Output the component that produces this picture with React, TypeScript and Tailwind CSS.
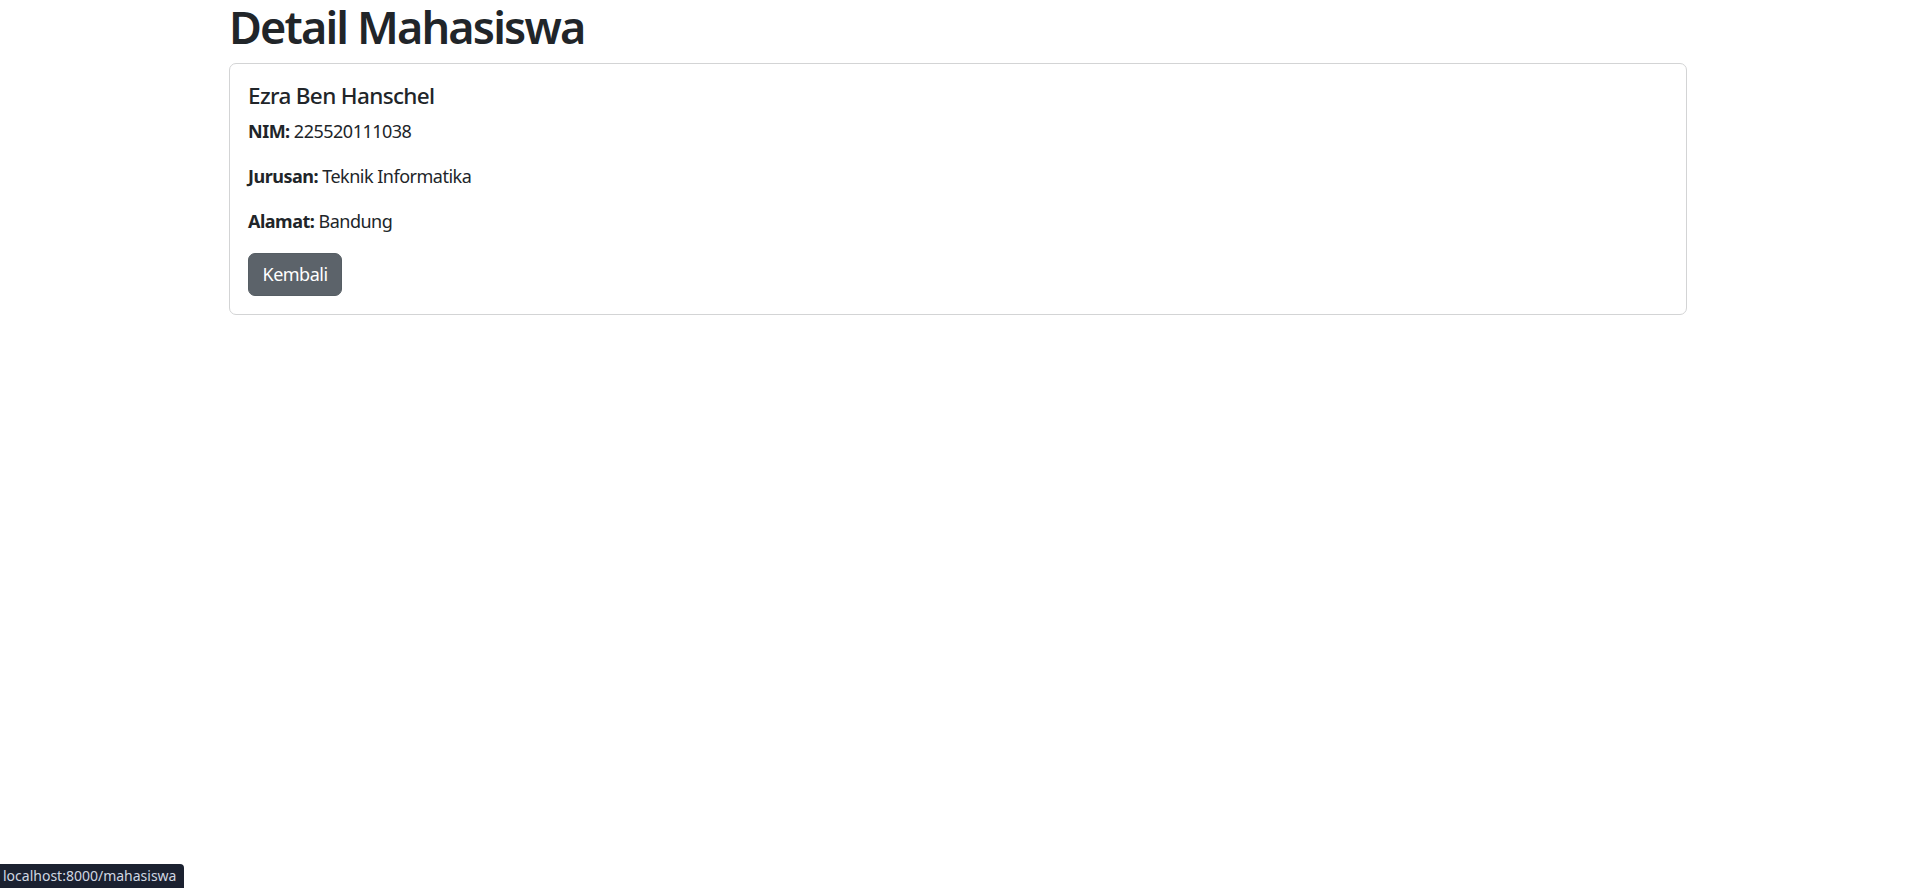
export default function App() {
  const font = { fontFamily: '"Noto Sans", "Open Sans", sans-serif' };
  return (
    <div className="min-h-[888px] bg-white text-[#212529] text-[18px] leading-[27px] tracking-[-0.5px]" style={font}>
      <div className="w-[1485px] mx-auto px-[13.5px]">
        <h1 className="text-[45px] leading-[54px] font-semibold tracking-[-1.85px] mb-[9px]">Detail Mahasiswa</h1>
        <div className="border border-[#d3d4d5] rounded-[7px]">
          <div className="p-[18px]">
            <h5 className="text-[22.5px] leading-[27px] font-medium tracking-[-0.65px] mb-[9px]">Ezra Ben Hanschel</h5>
            <p className="mb-[18px]">
              <strong className="font-bold">NIM:</strong> 225520111038
            </p>
            <p className="mb-[18px]">
              <strong className="font-bold">Jurusan:</strong> Teknik Informatika
            </p>
            <p className="mb-[18px]">
              <strong className="font-bold">Alamat:</strong> Bandung
            </p>
            <a
              href="#"
              className="inline-block bg-[#5c636a] border border-[#565e64] text-white rounded-[7px] px-[13.5px] py-[6.75px] leading-[27px]"
            >
              Kembali
            </a>
          </div>
        </div>
      </div>
      <div className="fixed left-0 bottom-0 bg-[#1b2130] text-[#d0d7e2] text-[14px] leading-[24px] tracking-normal pl-[3px] pr-[8px] rounded-tr-[4px]">
        localhost:8000/mahasiswa
      </div>
    </div>
  );
}
